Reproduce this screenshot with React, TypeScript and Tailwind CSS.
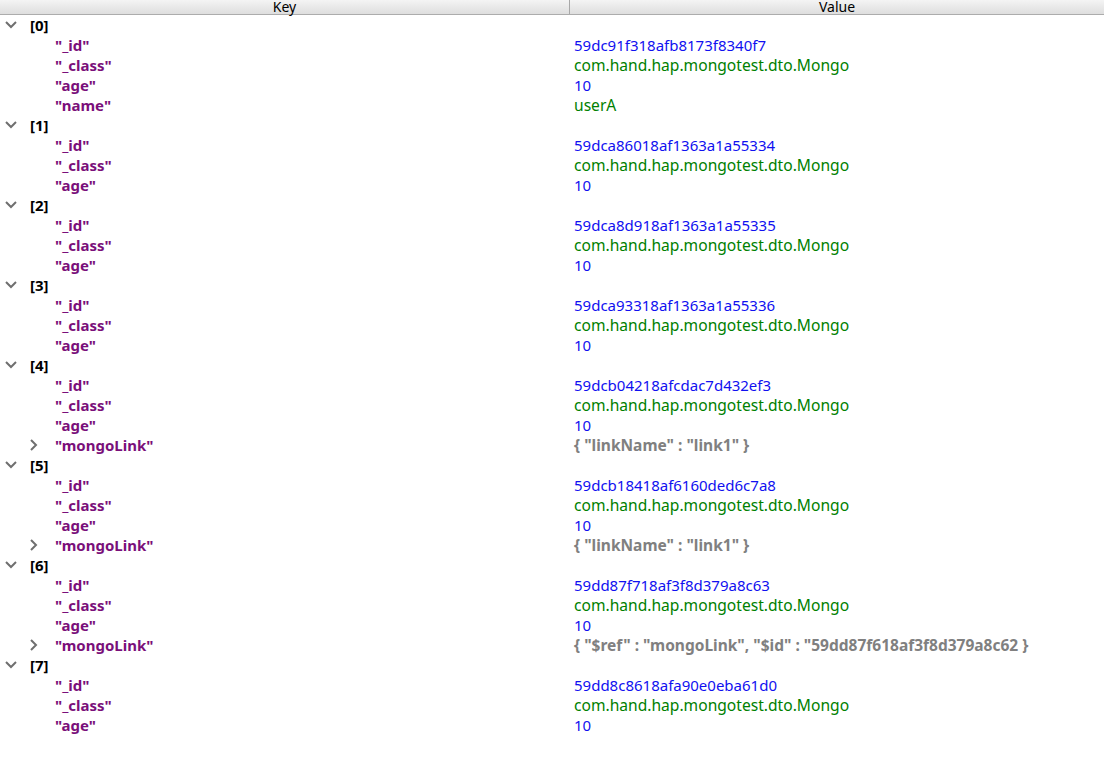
type Field = { key: string; value: string; kind: "id" | "str" | "num" | "obj" };

type Doc = { id: string; name?: string; link?: string };

const docs: Doc[] = [
  { id: "59dc91f318afb8173f8340f7", name: "userA" },
  { id: "59dca86018af1363a1a55334" },
  { id: "59dca8d918af1363a1a55335" },
  { id: "59dca93318af1363a1a55336" },
  { id: "59dcb04218afcdac7d432ef3", link: '{ "linkName" : "link1" }' },
  { id: "59dcb18418af6160ded6c7a8", link: '{ "linkName" : "link1" }' },
  {
    id: "59dd87f718af3f8d379a8c63",
    link: '{ "$ref" : "mongoLink", "$id" : "59dd87f618af3f8d379a8c62 }',
  },
  { id: "59dd8c8618afa90e0eba61d0" },
];

function fieldsOf(d: Doc): Field[] {
  const f: Field[] = [
    { key: '"_id"', value: d.id, kind: "id" },
    { key: '"_class"', value: "com.hand.hap.mongotest.dto.Mongo", kind: "str" },
    { key: '"age"', value: "10", kind: "num" },
  ];
  if (d.name) f.push({ key: '"name"', value: d.name, kind: "str" });
  if (d.link) f.push({ key: '"mongoLink"', value: d.link, kind: "obj" });
  return f;
}

const valueColor = {
  id: "text-[#1010f0] text-[15px]",
  str: "text-[#008000] text-[15.6px]",
  num: "text-[#1010f0] text-[15px]",
  obj: "text-[#808080] font-bold text-[15.5px]",
};

// little expander arrows, the tree widget draws them thin and grey
const Down = () => (
  <svg width="12" height="8" viewBox="0 0 12 8" className="ml-[5px] shrink-0">
    <polyline points="1,1 6,6 11,1" fill="none" stroke="#6f6f6f" strokeWidth="2" />
  </svg>
);

const Right = () => (
  <svg width="8" height="12" viewBox="0 0 8 12" className="ml-[30px] shrink-0">
    <polyline points="1,1 6,6 1,11" fill="none" stroke="#6f6f6f" strokeWidth="2" />
  </svg>
);

function Row({ left, value }: { left: React.ReactNode; value?: React.ReactNode }) {
  return (
    <div className="flex h-5 items-center">
      <div className="w-[574px] shrink-0 flex items-center">{left}</div>
      <div className="flex-1 whitespace-nowrap">{value}</div>
    </div>
  );
}

export default function App() {
  return (
    <div
      className="w-[1104px] h-[762px] bg-white overflow-hidden text-[15px] leading-5"
      style={{ fontFamily: '"Noto Sans", "Open Sans", sans-serif' }}
    >
      {/* header */}
      <div className="flex h-[15px] border-b border-[#acacac] bg-gradient-to-b from-[#f4f4f4] to-[#dedede] text-[14px] leading-[14px] text-black">
        <div className="w-[570px] border-r border-[#a8a8a8] text-center">Key</div>
        <div className="flex-1 text-center">Value</div>
      </div>

      {docs.map((d, i) => (
        <div key={i}>
          <Row
            left={
              <>
                <Down />
                <span className="ml-[13px] font-bold text-black">[{i}]</span>
              </>
            }
          />
          {fieldsOf(d).map((f) => (
            <Row
              key={f.key}
              left={
                f.kind === "obj" ? (
                  <>
                    <Right />
                    <span className="ml-[17px] font-bold text-[#7a0f7a]">{f.key}</span>
                  </>
                ) : (
                  <span className="ml-[55px] font-bold text-[#7a0f7a]">{f.key}</span>
                )
              }
              value={<span className={valueColor[f.kind]}>{f.value}</span>}
            />
          ))}
        </div>
      ))}
    </div>
  );
}
